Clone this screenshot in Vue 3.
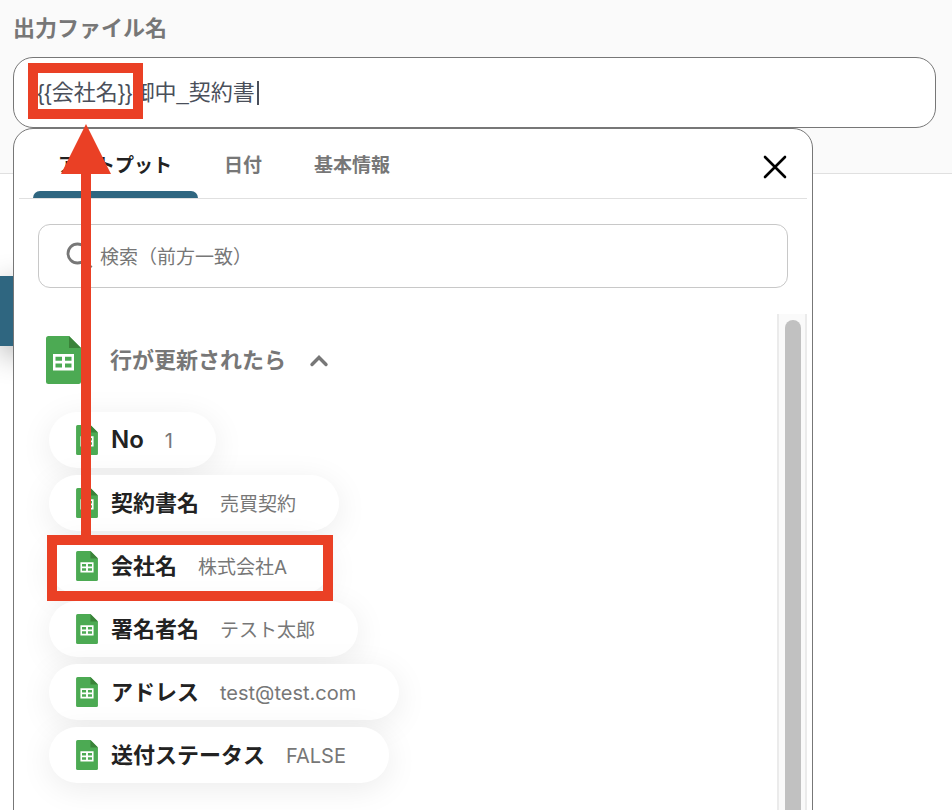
<script setup>
import { ref } from 'vue'

const fileName = ref('{{会社名}}御中_契約書')
const query = ref('')
const activeTab = ref('output')
const open = ref(true)

const tabs = [
  { id: 'output', label: 'アウトプット' },
  { id: 'date', label: '日付' },
  { id: 'basic', label: '基本情報' },
]

const fields = [
  { name: 'No', value: '1' },
  { name: '契約書名', value: '売買契約' },
  { name: '会社名', value: '株式会社A' },
  { name: '署名者名', value: 'テスト太郎' },
  { name: 'アドレス', value: 'test@test.com' },
  { name: '送付ステータス', value: 'FALSE' },
]

// Latin glyphs look smaller than kana and kanji at the same size
const isLatin = (text) => /^[\x20-\x7e]+$/.test(text)
</script>

<template>
  <main class="page">
    <section class="form-area">
      <label class="field-label" for="file-name">出力ファイル名</label>
      <div class="field-box">
        <input id="file-name" v-model="fileName" class="field-input" type="text" />
        <span class="caret"></span>
      </div>
    </section>

    <div class="side-block"></div>

    <section class="panel">
      <header class="panel-head">
        <nav class="tabs">
          <button
            v-for="tab in tabs"
            :key="tab.id"
            type="button"
            class="tab"
            :class="{ active: tab.id === activeTab }"
            @click="activeTab = tab.id"
          >{{ tab.label }}</button>
        </nav>
        <button type="button" class="close" aria-label="閉じる">
          <svg width="24" height="24" viewBox="0 0 24 24">
            <path d="M2 2L22 22M22 2L2 22" fill="none" stroke="#000" stroke-width="2.6" stroke-linecap="round" />
          </svg>
        </button>
      </header>

      <label class="search">
        <svg class="search-icon" width="28" height="28" viewBox="0 0 28 28">
          <circle cx="12.500" cy="11.500" r="9.5" fill="none" stroke="#777" stroke-width="2.8" />
          <path d="M19 18.500L26.500 25.500" stroke="#777" stroke-width="2.8" />
        </svg>
        <input v-model="query" class="search-input" type="text" placeholder="検索（前方一致）" />
      </label>

      <div class="body">
        <div class="list">
          <button type="button" class="group" @click="open = !open">
            <svg width="35" height="48" viewBox="0 0 35 48">
              <path d="M2.500 0H23L35 12V45.500Q35 48 32.500 48H2.500Q0 48 0 45.500V2.500Q0 0 2.500 0Z" fill="#4caa53" />
              <path d="M23 0L35 12H23Z" fill="#3a8339" />
              <path fill-rule="evenodd" d="M7 18H28V34.500H7ZM9.500 20.800V24.700H16V20.800ZM19 20.800V24.700H25.500V20.800ZM9.500 27.500V31.500H16V27.500ZM19 27.500V31.500H25.500V27.500Z" fill="#fff" />
            </svg>
            <span class="group-title">行が更新されたら</span>
            <svg width="20" height="14" viewBox="0 0 20 14">
              <path d="M3 11.500L10 4.500L17 11.500" fill="none" stroke="#777" stroke-width="3.4" stroke-linecap="round" />
            </svg>
          </button>

          <ul v-if="open" class="chips">
            <li v-for="field in fields" :key="field.name">
              <button type="button" class="chip">
                <svg width="22" height="30" viewBox="0 0 35 48">
                  <path d="M2.500 0H23L35 12V45.500Q35 48 32.500 48H2.500Q0 48 0 45.500V2.500Q0 0 2.500 0Z" fill="#4caa53" />
                  <path d="M23 0L35 12H23Z" fill="#3a8339" />
                  <path fill-rule="evenodd" d="M7 18H28V34.500H7ZM9.500 20.800V24.700H16V20.800ZM19 20.800V24.700H25.500V20.800ZM9.500 27.500V31.500H16V27.500ZM19 27.500V31.500H25.500V27.500Z" fill="#fff" />
                </svg>
                <span class="chip-name" :class="{ latin: isLatin(field.name) }">{{ field.name }}</span>
                <span class="chip-value" :class="{ latin: isLatin(field.value) }">{{ field.value }}</span>
              </button>
            </li>
          </ul>
        </div>
        <div class="scroll-track"><div class="scroll-thumb"></div></div>
      </div>
    </section>

    <svg class="marks" width="340" height="610" viewBox="0 0 340 610">
      <rect x="33" y="68" width="105" height="46" fill="none" stroke="#ea4025" stroke-width="10" />
      <rect x="52" y="540" width="276" height="56" fill="none" stroke="#ea4025" stroke-width="10" />
      <path d="M86 124L111 174H91V536H81V174H61Z" fill="#ea4025" />
    </svg>
  </main>
</template>

<style>
body {
  margin: 0;
  background: #fff;
}
</style>

<style scoped>
.page {
  position: relative;
  height: 100vh;
  overflow: hidden;
  font-family: Inter, "Noto Sans CJK JP", sans-serif;
  color: #777;
}

button,
input {
  margin: 0;
  padding: 0;
  border: 0;
  background: none;
  font: inherit;
  color: inherit;
  outline: none;
}

button {
  cursor: pointer;
}

.form-area {
  display: flex;
  flex-direction: column;
  gap: 13px;
  padding: 12px 16px 45px 13px;
  background: #fafafa;
  border-bottom: 1px solid #e0e0e0;
}

.field-label {
  font-size: 22px;
  line-height: 32px;
  font-weight: 700;
}

.field-box {
  display: flex;
  align-items: center;
  gap: 2px;
  height: 69px;
  padding: 0 23px;
  border: 1px solid #777;
  border-radius: 20px;
  background: #fff;
}

.field-input {
  field-sizing: content;
  font-family: "Liberation Sans", "Noto Sans CJK JP", sans-serif;
  font-size: 22px;
  line-height: 32px;
  color: #4a4f5a;
}

.caret {
  width: 2px;
  height: 24px;
  background: #4a4f5a;
}

.side-block {
  width: 60px;
  height: 70px;
  margin-top: 102px;
  background: #2f6680;
  box-shadow: 0 8px 30px rgba(0, 0, 0, 0.3);
}

.panel {
  position: absolute;
  top: 128px;
  left: 13px;
  bottom: -1px;
  width: 84%;
  box-sizing: border-box;
  display: flex;
  flex-direction: column;
  padding: 0 5px;
  border: 1px solid #777;
  border-radius: 20px 20px 0 0;
  background: #fff;
}

.panel-head {
  display: flex;
  justify-content: space-between;
  align-items: stretch;
  height: 69px;
  padding: 0 20px 0 14px;
  border-bottom: 1px solid #e0e0e0;
}

.tabs {
  display: flex;
  gap: 1px;
}

.tab {
  position: relative;
  padding: 4px 26px 0 25px;
  font-size: 19px;
  line-height: 28px;
  font-weight: 700;
}

.tab.active {
  color: #222;
}

.tab.active::after {
  content: "";
  position: absolute;
  left: 0;
  right: 0;
  bottom: 0;
  height: 7px;
  border-radius: 7px 7px 0 0;
  background: #2f6680;
}

.close {
  display: flex;
  align-items: center;
  padding-top: 7px;
}

.search {
  display: flex;
  align-items: center;
  gap: 7px;
  flex: none;
  height: 62px;
  margin: 25px 19px 0;
  padding: 0 26px;
  border: 1px solid #c8c8c8;
  border-radius: 12px;
}

.search-input {
  flex: 1;
  padding-top: 4px;
  font-size: 19px;
  line-height: 28px;
}

.search-input::placeholder {
  color: #777;
  opacity: 1;
}

.body {
  display: flex;
  flex: 1;
  min-height: 0;
  margin-top: 26px;
}

.list {
  flex: 1;
  overflow: hidden;
  padding: 22px 27px 0;
}

.group {
  display: flex;
  align-items: center;
  gap: 23px;
}

.group-title {
  padding-left: 6px;
  font-size: 22px;
  line-height: 32px;
  font-weight: 700;
}

.chips {
  display: flex;
  flex-direction: column;
  gap: 7px;
  margin: 28px 0 0;
  padding: 0 3px;
  list-style: none;
}

.chips li {
  display: flex;
}

.chip {
  display: flex;
  align-items: center;
  height: 56px;
  padding: 0 43px 0 27px;
  border-radius: 28px;
  background: #fff;
  box-shadow: 0 6px 32px rgba(0, 0, 0, 0.08);
}

.chip-name {
  margin-left: 13px;
  font-size: 22px;
  line-height: 32px;
  font-weight: 700;
  color: #222;
}

.chip-name.latin {
  font-size: 24px;
  font-weight: 600;
}

.chip-value {
  margin-left: 21px;
  padding-top: 4px;
  font-size: 19px;
  line-height: 28px;
}

.chip-value.latin {
  padding-top: 2px;
  font-size: 20px;
}

.scroll-track {
  width: 16px;
  padding: 6px 4px 0 6px;
  border: solid #ebebeb;
  border-width: 0 2px;
  background: #fafafa;
}

.scroll-thumb {
  height: 100%;
  border-radius: 8px 8px 0 0;
  background: #c1c1c1;
}

.marks {
  position: absolute;
  top: 0;
  left: 0;
  pointer-events: none;
}
</style>
